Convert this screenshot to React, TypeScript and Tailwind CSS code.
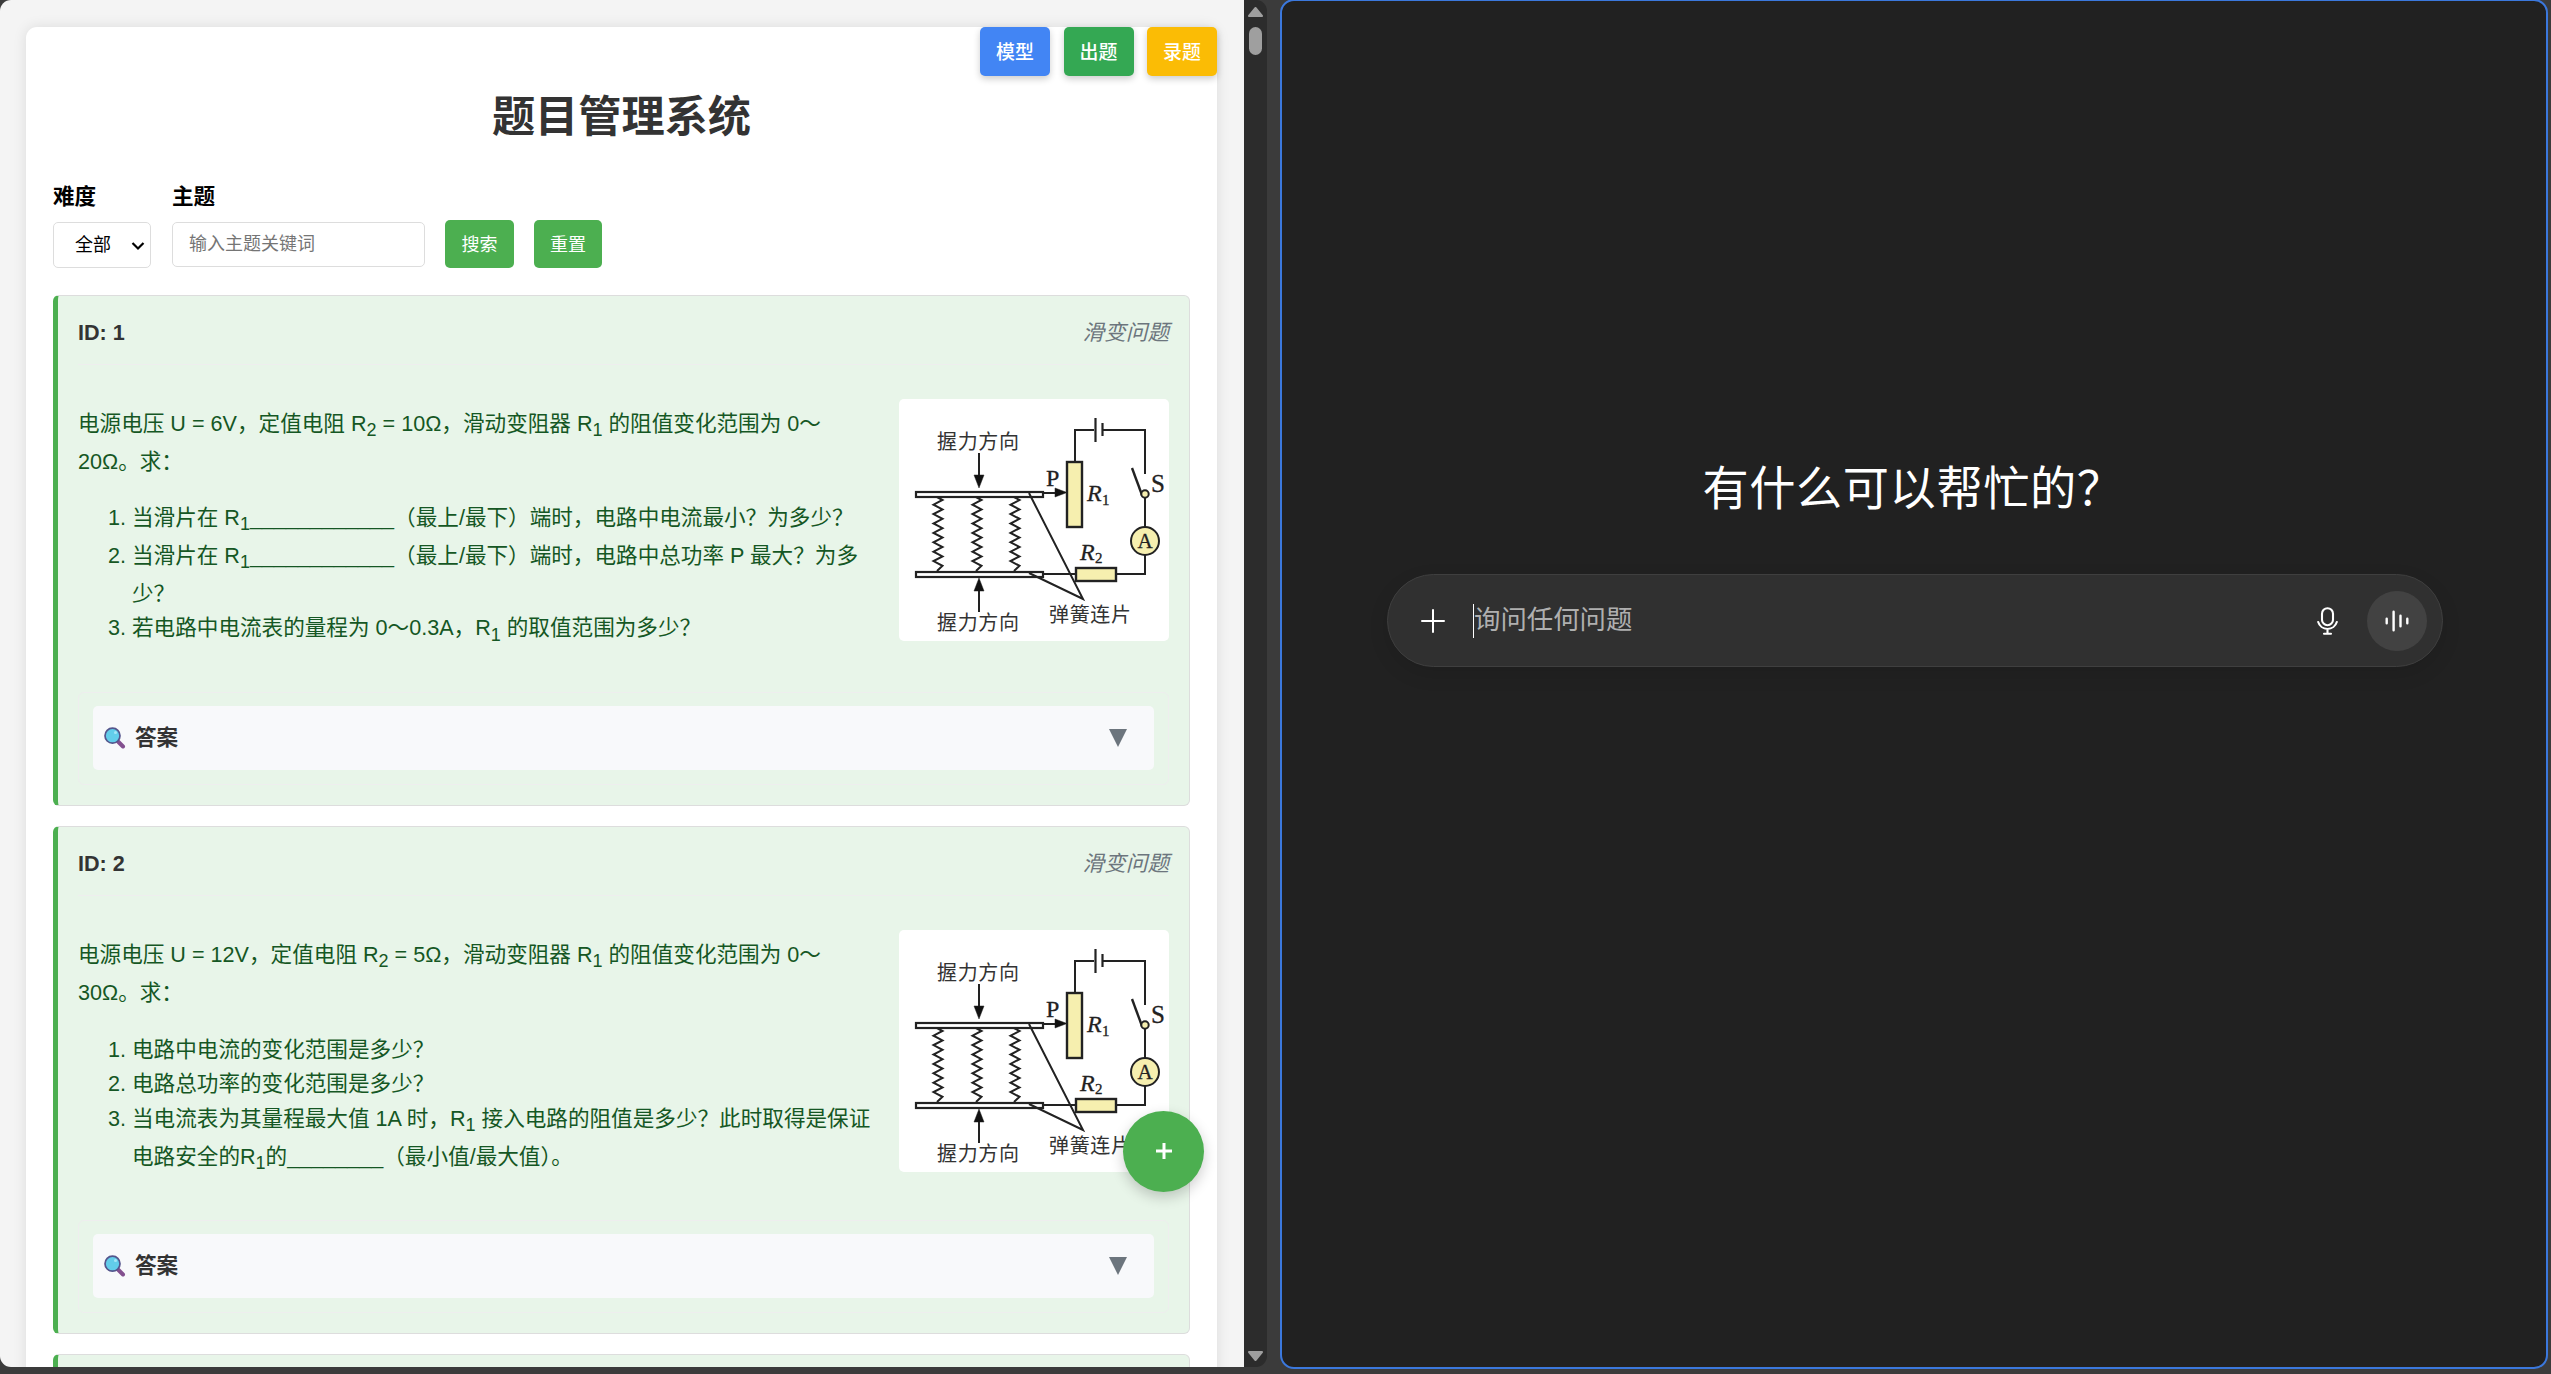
import type { ReactNode } from "react";

const SANS = "font-['Liberation_Sans','Noto_Sans_CJK_SC',sans-serif]";

function CircuitDiagram() {
  const zig = (x: number) => {
    let d = `M${x - 1} 98`;
    for (let i = 0; i < 15; i++) d += ` L${x + (i % 2 ? -4.5 : 4.5)} ${101 + i * 4.7}`;
    return d + ` L${x - 1} 172`;
  };
  return (
    <svg viewBox="0 0 270 242" className="block h-[242px] w-[270px] shrink-0 rounded-[5px] bg-white" fill="none" stroke="#222" strokeWidth="2">
      <g fill="#333" stroke="none" fontFamily="'Noto Sans CJK SC',serif" fontSize="20">
        <text x="38" y="50" textLength="82">握力方向</text>
        <text x="38" y="231" textLength="82">握力方向</text>
        <text x="150" y="223" textLength="82">弹簧连片</text>
      </g>
      <path d="M80 54V80M80 213V190M144 94H158" />
      <path d="M75 76L80 89L85 76ZM75 192L80 179L85 192ZM156 89L168 93.500L156 98Z" fill="#111" strokeWidth="0.5" />
      <rect x="17" y="93" width="127" height="5" strokeWidth="2.200" />
      <rect x="17" y="173" width="127" height="5" strokeWidth="2.200" />
      <path d={zig(39)} />
      <path d={zig(78)} />
      <path d={zig(116)} />
      <path d="M130 94L184 200L130 174M144 175H177M217 175H246V156M246 133V118M246 118V99M176 62V31H195M203.500 31H246V75" />
      <path d="M196.500 19V43M203.500 24V37" strokeWidth="2.200" />
      <path d="M233 69L243 96" strokeWidth="2.400" />
      <rect x="168" y="63" width="15" height="65" fill="#f6efaf" strokeWidth="2.400" />
      <rect x="177" y="169" width="40" height="13" fill="#f6efaf" strokeWidth="2.400" />
      <circle cx="246" cy="95" r="3.700" fill="#f6efaf" />
      <circle cx="246" cy="142" r="14" fill="#f6efaf" />
      <g fill="#222" stroke="#222" strokeWidth="0.300" fontFamily="'Liberation Serif',serif" fontSize="24">
        <text x="147" y="87">P</text>
        <text x="252" y="93" fontSize="25">S</text>
        <text x="188" y="102" fontStyle="italic">R</text>
        <text x="203" y="106" fontSize="15">1</text>
        <text x="181" y="161" fontStyle="italic">R</text>
        <text x="196" y="164" fontSize="15">2</text>
        <text x="238.500" y="149" fontSize="21">A</text>
      </g>
    </svg>
  );
}

function Magnifier() {
  return (
    <svg viewBox="0 0 22 22" className="h-[22px] w-[22px]" fill="none">
      <path d="M14 14.500L19 19.500" stroke="#83508f" strokeWidth="4" strokeLinecap="round" />
      <circle cx="8.500" cy="8.700" r="7.500" fill="#62cdea" stroke="#54558c" strokeWidth="1.700" />
      <circle cx="11.500" cy="5.500" r="1.500" fill="#a5e6f7" />
    </svg>
  );
}

function Question({ id, children, height }: { id?: number; children?: ReactNode; height: string }) {
  return (
    <article className={`shrink-0 rounded-[6px] border border-l-[5px] border-[#ddd] border-l-[#4caf50] bg-[#e8f5e9] pr-5 pl-5 ${height}`}>
      {id !== undefined && (
        <header className="flex h-[69px] items-center justify-between border-b border-[#eee] pt-[6px] text-[21.6px]">
          <strong className="font-bold text-[#333]">ID: {id}</strong>
          <span className="text-[#6c757d] italic">滑变问题</span>
        </header>
      )}
      {children}
    </article>
  );
}

function Body({ children, height }: { children: ReactNode; height: string }) {
  return (
    <div className={`flex justify-between pt-[34px] ${height}`}>
      <div className="pt-[8px] text-[21.6px] leading-[1.6] whitespace-nowrap text-[#155724] [&_sub]:bottom-0 [&_sub]:align-sub [&_sub]:text-[18px] [&_sub]:leading-[1.6]">{children}</div>
      <CircuitDiagram />
    </div>
  );
}

function Answer() {
  return (
    <div className="h-[93px] rounded-[6px] border border-[#eee] px-[14px] py-[13px]">
      <div className="flex h-[64px] items-center rounded-[5px] bg-[#f8f9fb] pr-[27px] pl-[11px]">
        <Magnifier />
        <span className="ml-[9px] text-[21.6px] font-bold text-[#333]">答案</span>
        <svg viewBox="0 0 18 18" className="ml-auto h-[18px] w-[18px]">
          <path d="M0 0H18L9 18Z" fill="#6c757d" />
        </svg>
      </div>
    </div>
  );
}

function ManagerPage() {
  const btn = "h-12 rounded-[5px] bg-[#4caf50] pt-[3px] text-[18px] text-white";
  const top = "h-[49px] w-[70px] rounded-[5px] pt-[4px] text-[18.900px] font-medium text-white shadow-[0_3px_7px_rgba(0,0,0,0.2)]";
  return (
    <div className="relative h-[1367px] w-[1244px] shrink-0 overflow-hidden rounded-l-[11px] bg-[#f4f4f4] pt-[27px] pl-[26px]">
      <main className="flex h-[1500px] w-[1191px] flex-col rounded-[11px] bg-white px-[27px] shadow-[0_0_14px_rgba(0,0,0,0.1)]">
        <h1 className="mt-[58px] h-[64px] text-center text-[43.200px] leading-[64px] font-bold text-[#333]">题目管理系统</h1>
        <div className="mt-[32px] mb-[27px] flex items-end text-black">
          <label className="mr-[21px] flex w-[98px] flex-col">
            <span className="mb-[9px] text-[21.600px] leading-[32px] font-bold">难度</span>
            <span className="flex h-[46px] items-center justify-between rounded-[5px] border border-[#ddd] pr-[5px] pl-[21px] text-[18px]">
              全部
              <svg viewBox="0 0 14 14" className="mt-0.5 h-[14px] w-[14px]" fill="none" stroke="#000" strokeWidth="2.200">
                <path d="M1.500 4L7 9.500L12.500 4" />
              </svg>
            </span>
          </label>
          <label className="mr-[20px] mb-px flex w-[253px] flex-col">
            <span className="mb-[9px] text-[21.600px] leading-[32px] font-bold">主题</span>
            <input placeholder="输入主题关键词" className="h-[45px] rounded-[5px] border border-[#ddd] px-4 text-[18px] placeholder:text-[#757575]" />
          </label>
          <button className={`mr-5 w-[69px] ${btn}`}>搜索</button>
          <button className={`w-[68px] ${btn}`}>重置</button>
        </div>
        <div className="flex flex-col gap-5">
          <Question id={1} height="h-[511px]">
            <Body height="h-[327px]">
              <p>
                电源电压 U = 6V，定值电阻 R<sub>2</sub> = 10Ω，滑动变阻器 R<sub>1</sub> 的阻值变化范围为 0～<br />
                20Ω。求：
              </p>
              <ol className="mt-[21px] list-decimal pl-[54px]">
                <li>当滑片在 R<sub>1</sub>____________（最上/最下）端时，电路中电流最小？为多少？</li>
                <li>
                  当滑片在 R<sub>1</sub>____________（最上/最下）端时，电路中总功率 P 最大？为多<br />
                  少？
                </li>
                <li>若电路中电流表的量程为 0～0.3A，R<sub>1</sub> 的取值范围为多少？</li>
              </ol>
            </Body>
            <Answer />
          </Question>
          <Question id={2} height="h-[508px]">
            <Body height="h-[324px]">
              <p>
                电源电压 U = 12V，定值电阻 R<sub>2</sub> = 5Ω，滑动变阻器 R<sub>1</sub> 的阻值变化范围为 0～<br />
                30Ω。求：
              </p>
              <ol className="mt-[22px] list-decimal pl-[54px]">
                <li>电路中电流的变化范围是多少？</li>
                <li>电路总功率的变化范围是多少？</li>
                <li>
                  当电流表为其量程最大值 1A 时，R<sub>1</sub> 接入电路的阻值是多少？此时取得是保证<br />
                  电路安全的R<sub>1</sub>的________（最小值/最大值）。
                </li>
              </ol>
            </Body>
            <Answer />
          </Question>
          <Question height="h-[100px]" />
        </div>
      </main>
      <nav className="absolute top-[27px] right-[27px] flex gap-[13.500px]">
        <button className={`bg-[#4285f4] ${top}`}>模型</button>
        <button className={`bg-[#34a853] ${top}`}>出题</button>
        <button className={`bg-[#fbbc05] ${top}`}>录题</button>
      </nav>
      <button className="absolute top-[1111px] right-[40px] flex h-[81px] w-[81px] items-center justify-center rounded-full bg-[#4caf50] shadow-[0_5px_14px_rgba(0,0,0,0.2)]">
        <svg viewBox="0 0 16 16" className="-mt-px h-4 w-4" stroke="#fff" strokeWidth="3">
          <path d="M8 0V16M0 8H16" />
        </svg>
      </button>
    </div>
  );
}

function Scrollbar() {
  return (
    <div className="flex h-[1367px] w-[23px] shrink-0 flex-col items-center rounded-r-[11px] bg-[#2c2c2c] pt-[7px] pb-[6px]">
      <svg viewBox="0 0 15 10" className="h-[10px] w-[15px]">
        <path d="M7.500 1L14 9H1Z" fill="#9f9f9f" stroke="#9f9f9f" strokeWidth="2" strokeLinejoin="round" />
      </svg>
      <div className="mt-[10px] h-[28px] w-[13px] rounded-full bg-[#9f9f9f]" />
      <svg viewBox="0 0 15 10" className="mt-auto h-[10px] w-[15px]">
        <path d="M7.500 9L14 1H1Z" fill="#9f9f9f" stroke="#9f9f9f" strokeWidth="2" strokeLinejoin="round" />
      </svg>
    </div>
  );
}

function ChatPage() {
  return (
    <section className="-mt-px ml-[13px] h-[1370px] w-[1268px] shrink-0 rounded-[14px] border-2 border-[#3b78dd] bg-[#212121]">
      <h2 className="mt-[453px] mr-[2px] text-center text-[46.200px] leading-[70px] tracking-[0.600px] text-white">有什么可以帮忙的？</h2>
      <div className="mt-[50px] ml-[105px] flex h-[93px] w-[1056px] items-center rounded-full border border-[#3f3f3f] bg-[#303030] pr-[15px] pl-[33px] shadow-[0_7px_20px_rgba(0,0,0,0.1)]">
        <svg viewBox="0 0 24 24" className="h-6 w-6" stroke="#fff" strokeWidth="2" strokeLinecap="round">
          <path d="M12 1V23M1 12H23" />
        </svg>
        <span className="ml-[28px] h-[34px] w-px bg-white" />
        <span className="pt-px text-[26.400px] text-[#afafaf]">询问任何问题</span>
        <svg viewBox="0 0 21 28" className="ml-auto h-[28px] w-[21px]" fill="none" stroke="#fff" strokeWidth="2.100" strokeLinecap="round">
          <rect x="5" y="1.200" width="11" height="17" rx="5.500" />
          <path d="M1.200 15A9.700 9.700 0 0 0 19.800 15M10.500 22V26.500M7 26.700H14" />
        </svg>
        <span className="ml-[29px] flex h-[60px] w-[60px] items-center justify-center rounded-full bg-[#424242]">
          <svg viewBox="0 0 24 22" className="h-[22px] w-6" stroke="#fff" strokeWidth="2.400" strokeLinecap="round">
            <path d="M1.700 8.800V13.200M8.600 1.700V20.300M15.500 5.700V16.300M22.300 8.800V13.200" />
          </svg>
        </span>
      </div>
    </section>
  );
}

export default function App() {
  return (
    <div className={`flex h-[1374px] w-[2551px] overflow-hidden bg-[#3b3b3b] ${SANS}`}>
      <ManagerPage />
      <Scrollbar />
      <ChatPage />
    </div>
  );
}
